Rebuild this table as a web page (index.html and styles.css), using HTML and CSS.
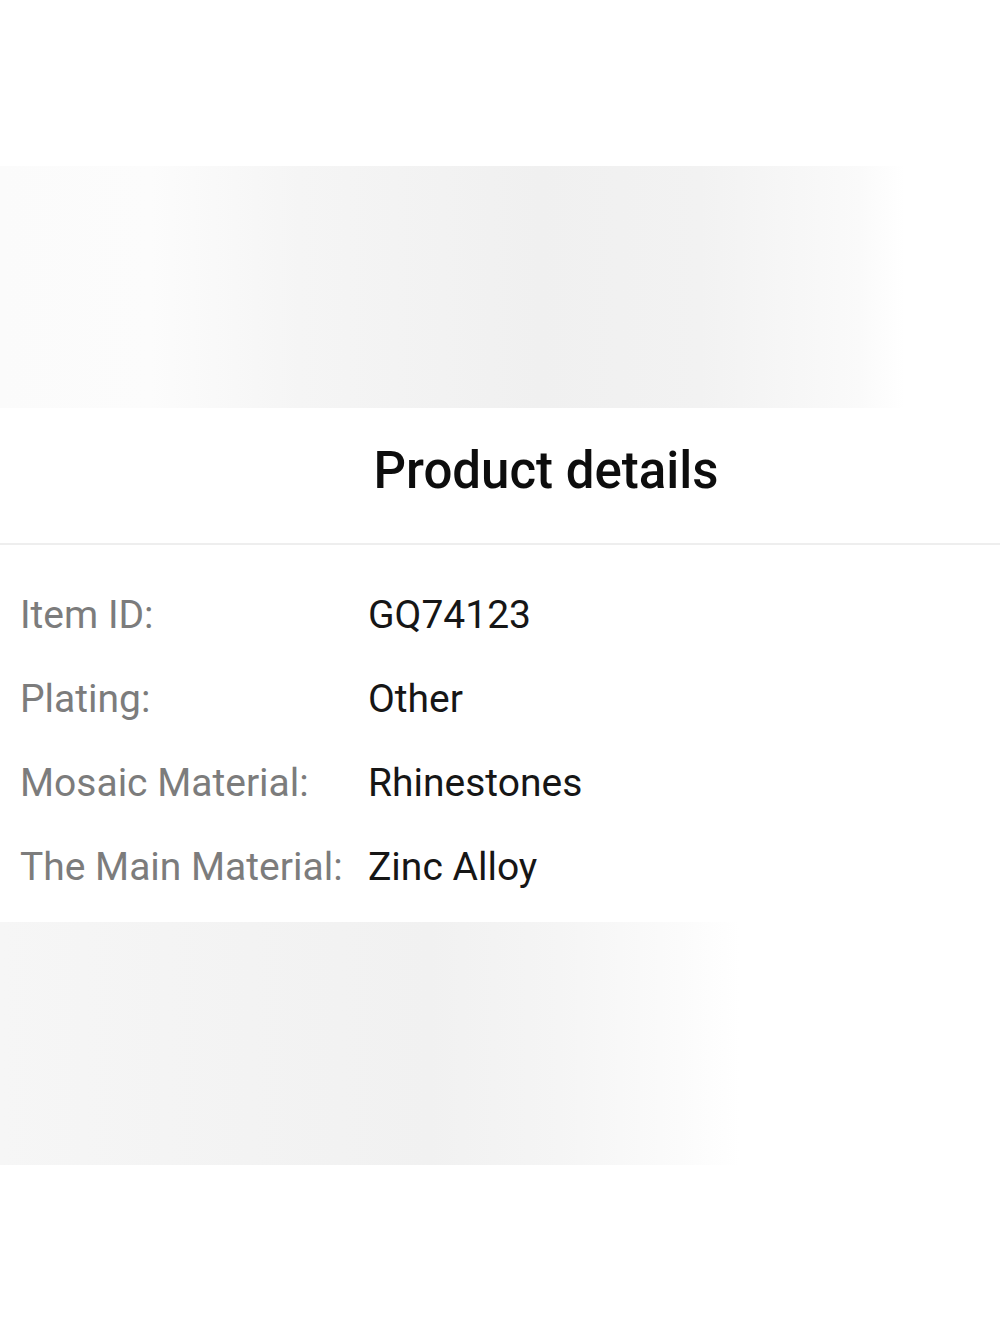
FILE: index.html
```html
<!DOCTYPE html>
<html>
<head>
<meta charset="utf-8">
<link rel="stylesheet" href="styles.css">
</head>
<body>
<div class="page">
  <div class="blank-top"></div>
  <div class="band band-top"></div>
  <div class="title-wrap"><h1 class="title">Product details</h1></div>
  <div class="details">
    <div class="label">Item ID:</div><div class="value">GQ74123</div>
    <div class="label">Plating:</div><div class="value">Other</div>
    <div class="label">Mosaic Material:</div><div class="value">Rhinestones</div>
    <div class="label">The Main Material:</div><div class="value">Zinc Alloy</div>
  </div>
  <div class="band band-bottom"></div>
</div>
</body>
</html>
```

FILE: styles.css
```css
html, body {
  margin: 0;
  padding: 0;
  background: #ffffff;
}
.page {
  width: 1000px;
  height: 1333px;
  font-family: Roboto, "Liberation Sans", sans-serif;
  background: #ffffff;
  overflow: hidden;
}
.blank-top {
  height: 166px;
}
.band {
  height: 242px;
}
.band-top {
  background: linear-gradient(to right, #fbfbfb 0, #fcfcfc 150px, #f5f5f5 300px, #f0f0f0 540px, #f2f2f2 700px, #fafafa 860px, #ffffff 905px);
}
.band-bottom {
  margin-top: 13px;
  height: 243px;
  background: linear-gradient(to right, #f6f6f6 0, #f3f3f3 250px, #f1f1f1 430px, #f5f5f5 560px, #fbfbfb 680px, #ffffff 740px);
}
.title-wrap {
  display: flex;
  justify-content: center;
  padding-left: 92px;
  padding-bottom: 10px;
  border-bottom: 2px solid #eeeeee;
}
.title {
  margin: 0;
  font-size: 51px;
  font-weight: 500;
  line-height: 125px;
  color: #0d0d0d;
}
.details {
  display: grid;
  grid-template-columns: 348px auto;
  padding: 28px 0 0 20px;
  font-size: 39px;
  line-height: 84px;
}
.label {
  color: #7c7c7c;
}
.value {
  color: #161616;
}
```
